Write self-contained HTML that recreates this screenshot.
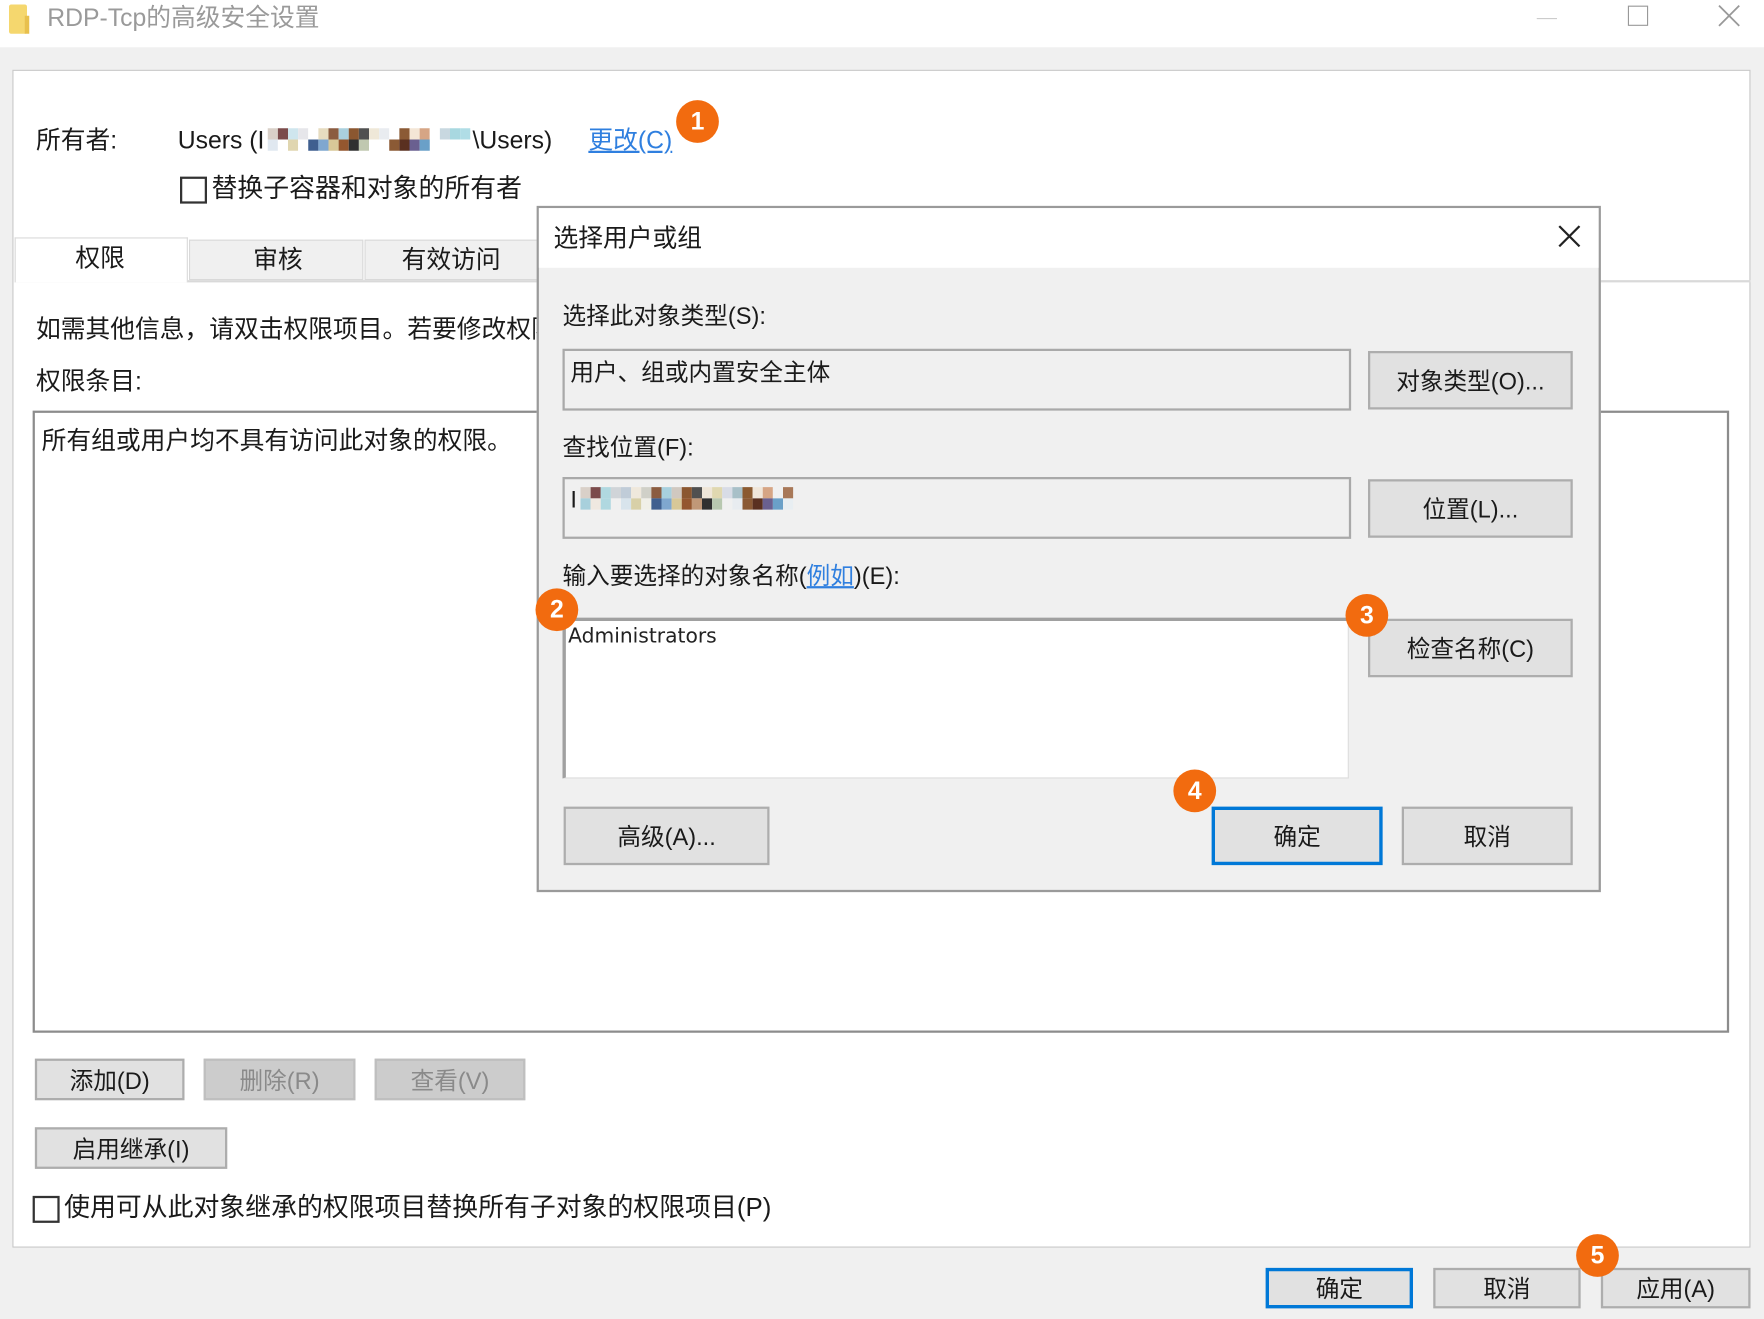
<!DOCTYPE html>
<html><head><meta charset="utf-8">
<style>
html,body{margin:0;padding:0;width:1764px;height:1318px;overflow:hidden;background:#f0f0f0}
#w{position:absolute;left:0;top:0;width:1568px;height:1172px;transform:scale(1.125);transform-origin:0 0;background:#f0f0f0;font-family:"Liberation Sans","Noto Sans CJK SC",sans-serif;color:#1a1a1a;font-size:21px}
.a{position:absolute;white-space:nowrap}
.t{line-height:1;}
.btn{position:absolute;background:#e1e1e1;border:2px solid #adadad;box-sizing:border-box;display:flex;align-items:center;justify-content:center;font-size:21px;color:#1a1a1a}
.dis{background:#cccccc;border-color:#bfbfbf;color:#8a8a8a}
.def{border:3px solid #0078d7}
.badge{position:absolute;width:38px;height:38px;border-radius:50%;background:#f26b0f;color:#fff;font-weight:bold;font-size:22px;display:flex;align-items:center;justify-content:center;transform:translate(-19px,-19px)}
.cb{position:absolute;width:20px;height:20px;border:2px solid #333;background:#fff}
.pix{position:absolute;display:flex;flex-wrap:wrap}
.pix i{display:block;width:9px;height:10px}
</style></head><body><div id="w">
<div class="a" style="left:0;top:0;width:1568px;height:42px;background:#fff"></div>
<div class="a" style="left:8px;top:4px;width:16px;height:26px;background:#f5d76e;border-radius:2px"></div>
<div class="a" style="left:22px;top:14px;width:4px;height:16px;background:#e8c04d"></div>
<div class="a t" style="left:42px;top:5px;font-size:22px;color:#9a9a9a">RDP-Tcp的高级安全设置</div>
<div class="a" style="left:1366px;top:16px;width:18px;height:1px;background:#ccc"></div>
<div class="a" style="left:1447px;top:5px;width:16px;height:16px;border:1.5px solid #999"></div>
<svg class="a" style="left:1527px;top:4px" width="20" height="20"><path d="M1 1L19 19M19 1L1 19" stroke="#999" stroke-width="1.6"/></svg>
<div class="a" style="left:11px;top:62px;width:1545px;height:1047px;background:#fff;border:1.5px solid #c8c8c8;box-sizing:border-box"></div>
<div class="a t" style="left:32px;top:114px;font-size:22px">所有者:</div>
<div class="a t" style="left:158px;top:114px;font-size:22px">Users (I</div>
<div class="pix" style="left:238px;top:114px;width:180px;height:20px">
<i style="background:#d9d0c8"></i><i style="background:#7b4b4b"></i><i style="background:#cfe6ee"></i><i style="background:#e6e6ea"></i><i style="background:#fff"></i><i style="background:#e6dcc0"></i><i style="background:#8b5c40"></i><i style="background:#aad0de"></i><i style="background:#8b5730"></i><i style="background:#505050"></i><i style="background:#efe8d8"></i><i style="background:#e9ecf0"></i><i style="background:#fff"></i><i style="background:#8b5a35"></i><i style="background:#f4e6d6"></i><i style="background:#d6a585"></i><i style="background:#fff"></i><i style="background:#c8d8e0"></i><i style="background:#a8d8e0"></i><i style="background:#b0dde6"></i><i style="background:#e0e8f0"></i><i style="background:#fff"></i><i style="background:#e0d6b0"></i><i style="background:#fff"></i><i style="background:#3f5f8f"></i><i style="background:#7fa7cf"></i><i style="background:#d8c898"></i><i style="background:#94572f"></i><i style="background:#303030"></i><i style="background:#c0c8b0"></i><i style="background:#fff"></i><i style="background:#fff"></i><i style="background:#8b5a35"></i><i style="background:#5a3020"></i><i style="background:#6a6090"></i><i style="background:#6aa0c8"></i></div>
<div class="a t" style="left:420px;top:114px;font-size:22px">\Users)</div>
<div class="a t" style="left:523px;top:114px;font-size:22px;color:#2f7fdf;text-decoration:underline">更改(C)</div>
<div class="badge" style="left:620px;top:108px">1</div>
<div class="cb" style="left:160px;top:157px"></div>
<div class="a t" style="left:188px;top:156px;font-size:23px">替换子容器和对象的所有者</div>
<div class="a" style="left:13px;top:249px;width:1543px;height:2px;background:#d9d9d9"></div>
<div class="a" style="left:13px;top:211px;width:154px;height:40px;background:#fff;border:1.5px solid #d9d9d9;border-bottom:none;box-sizing:border-box"></div>
<div class="a" style="left:168px;top:213px;width:155px;height:36px;background:#f0f0f0;border:1.5px solid #d9d9d9;box-sizing:border-box"></div>
<div class="a" style="left:324px;top:213px;width:155px;height:36px;background:#f0f0f0;border:1.5px solid #d9d9d9;box-sizing:border-box"></div>
<div class="a t" style="left:67px;top:219px;font-size:22px">权限</div>
<div class="a t" style="left:225px;top:220px;font-size:22px">审核</div>
<div class="a t" style="left:357px;top:220px;font-size:22px">有效访问</div>
<div class="a t" style="left:32px;top:282px;font-size:22px">如需其他信息，请双击权限项目。若要修改权限项目，请选择该项目并单击“编辑”(如果可用)。</div>
<div class="a t" style="left:32px;top:328px;font-size:22px">权限条目:</div>
<div class="a" style="left:29px;top:365px;width:1508px;height:553px;background:#fff;border:2px solid #8c8c8c;box-sizing:border-box"></div>
<div class="a t" style="left:37px;top:381px;font-size:22px">所有组或用户均不具有访问此对象的权限。</div>
<div class="btn" style="left:31px;top:941px;width:133px;height:37px">添加(D)</div>
<div class="btn dis" style="left:181px;top:941px;width:135px;height:37px">删除(R)</div>
<div class="btn dis" style="left:333px;top:941px;width:134px;height:37px">查看(V)</div>
<div class="btn" style="left:31px;top:1002px;width:171px;height:37px">启用继承(I)</div>
<div class="cb" style="left:29px;top:1063px"></div>
<div class="a t" style="left:57px;top:1062px;font-size:23px">使用可从此对象继承的权限项目替换所有子对象的权限项目(P)</div>
<div class="btn def" style="left:1125px;top:1127px;width:131px;height:36px">确定</div>
<div class="btn" style="left:1274px;top:1127px;width:131px;height:36px">取消</div>
<div class="btn" style="left:1423px;top:1127px;width:133px;height:36px">应用(A)</div>
<div class="badge" style="left:1420px;top:1116px">5</div>
<div class="a" style="left:477px;top:183px;width:946px;height:610px;background:#f0f0f0;border:2px solid #9a9a9a;box-sizing:border-box"></div>
<div class="a" style="left:479px;top:185px;width:942px;height:53px;background:#fff"></div>
<div class="a t" style="left:492px;top:201px;font-size:22px">选择用户或组</div>
<svg class="a" style="left:1385px;top:200px" width="20" height="20"><path d="M1 1L19 19M19 1L1 19" stroke="#222" stroke-width="2"/></svg>
<div class="a t" style="left:500px;top:271px">选择此对象类型(S):</div>
<div class="a" style="left:500px;top:310px;width:701px;height:55px;border:2px solid #a9a9a9;background:#f0f0f0;box-sizing:border-box"></div>
<div class="a t" style="left:507px;top:321px">用户、组或内置安全主体</div>
<div class="btn" style="left:1216px;top:312px;width:182px;height:52px">对象类型(O)...</div>
<div class="a t" style="left:500px;top:388px">查找位置(F):</div>
<div class="a" style="left:500px;top:424px;width:701px;height:55px;border:2px solid #a9a9a9;background:#f0f0f0;box-sizing:border-box"></div>
<div class="a t" style="left:507px;top:434px">I</div>
<div class="pix" style="left:516px;top:433px;width:190px;height:20px">
<i style="background:#d9d0c8"></i><i style="background:#7b4b4b"></i><i style="background:#b0d8e0"></i><i style="background:#d0d4d8"></i><i style="background:#c0ccd8"></i><i style="background:#efe8dc"></i><i style="background:#d0d0c8"></i><i style="background:#8b5c40"></i><i style="background:#a8d0de"></i><i style="background:#d0c8c0"></i><i style="background:#8b5730"></i><i style="background:#505050"></i><i style="background:#efe6d8"></i><i style="background:#e0d8b0"></i><i style="background:#d8dce6"></i><i style="background:#a8c0c8"></i><i style="background:#8b5a30"></i><i style="background:#f0e6da"></i><i style="background:#d6a585"></i><i style="background:#f0f0f0"></i><i style="background:#a87858"></i>
<i style="background:#a8d0dc"></i><i style="background:#efe8e0"></i><i style="background:#b0d8e0"></i><i style="background:#f0f0f0"></i><i style="background:#d8e4ec"></i><i style="background:#d8d0a8"></i><i style="background:#f0efe8"></i><i style="background:#3f5f8f"></i><i style="background:#7fa7cf"></i><i style="background:#d8c898"></i><i style="background:#94572f"></i><i style="background:#c09878"></i><i style="background:#303030"></i><i style="background:#b8c8b0"></i><i style="background:#f0f0f0"></i><i style="background:#e8ecf0"></i><i style="background:#8b5a35"></i><i style="background:#5a3020"></i><i style="background:#6a6090"></i><i style="background:#6aa0c8"></i><i style="background:#e8eef2"></i></div>
<div class="btn" style="left:1216px;top:426px;width:182px;height:52px">位置(L)...</div>
<div class="a t" style="left:500px;top:502px">输入要选择的对象名称(<span style="color:#2f7fdf;text-decoration:underline">例如</span>)(E):</div>
<div class="a" style="left:500px;top:549px;width:699px;height:143px;background:#fff;border-top:3px solid #a0a0a0;border-left:3px solid #a0a0a0;border-right:1px solid #ddd;border-bottom:1px solid #ddd;box-sizing:border-box"></div>
<div class="a t" style="left:505px;top:557px;font-family:'DejaVu Sans',sans-serif;font-size:18px;color:#222">Administrators</div>
<div class="btn" style="left:1216px;top:550px;width:182px;height:52px">检查名称(C)</div>
<div class="btn" style="left:501px;top:717px;width:183px;height:52px">高级(A)...</div>
<div class="btn def" style="left:1077px;top:717px;width:152px;height:52px">确定</div>
<div class="btn" style="left:1246px;top:717px;width:152px;height:52px">取消</div>
<div class="badge" style="left:495px;top:542px">2</div>
<div class="badge" style="left:1215px;top:547px">3</div>
<div class="badge" style="left:1062px;top:703px">4</div>
</div></body></html>
